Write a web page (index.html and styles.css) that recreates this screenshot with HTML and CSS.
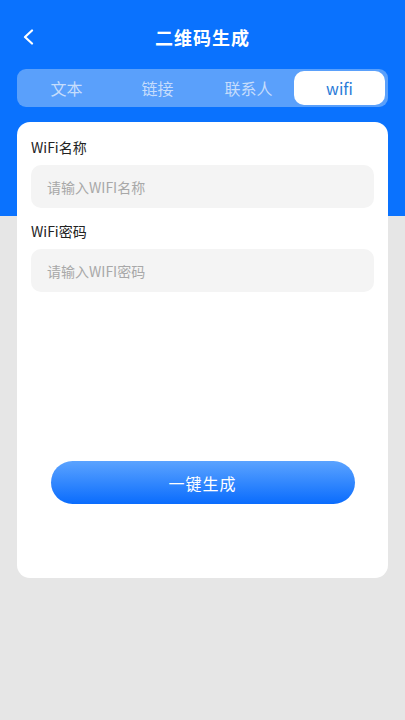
FILE: index.html
```html
<!DOCTYPE html>
<html lang="zh-CN">
<head>
  <meta charset="UTF-8" />
  <title>二维码生成</title>
  <link rel="stylesheet" href="styles.css">
</head>
<body>
  <header class="nav">
    <span class="back">
      <svg viewBox="0 0 12 16" width="12" height="16">
        <path d="M10 1.5 L3 8 L10 14.5" fill="none" stroke="#fff" stroke-width="2.2" stroke-linecap="round" stroke-linejoin="round"/>
      </svg>
    </span>
    <h1>二维码生成</h1>
  </header>

  <!-- 类型切换 -->
  <nav class="tabs">
    <div class="tab">文本</div>
    <div class="tab">链接</div>
    <div class="tab">联系人</div>
    <div class="tab active">wifi</div>
  </nav>

  <main class="card">
    <label class="label">WiFi名称</label>
    <input class="field" type="text" placeholder="请输入WIFI名称">
    <label class="label">WiFi密码</label>
    <input class="field" type="text" placeholder="请输入WIFI密码">
    <button class="submit" type="button">一键生成</button>
  </main>
</body>
</html>
```

FILE: styles.css
```css
body {
  margin: 0; width: 405px; min-height: 720px;
  font-family: "Noto Sans CJK SC", "Noto Sans", sans-serif;
  background: linear-gradient(#0a72fe 0, #0a72fe 216px, #e6e6e6 216px);
}

.nav {display:flex; align-items:center; justify-content:center; height:69px; padding-top:5px; box-sizing:border-box; position:relative;}
.nav h1 {margin:0; font-size:18px; font-weight:700; color:#fff; letter-spacing:1px;}
.back {position:absolute; left:22px; top:29px; width:12px; height:16px;}
.back svg {display:block;}

/* 切换标签 */
.tabs {
  display:flex; margin:0 17px; height:38px; padding:2px 3px 2px 4px; box-sizing:border-box;
  background:#5aa0fb; border-radius:9px;
}
.tab {flex:1; display:flex; align-items:center; justify-content:center;
  font-size:16px; color:#c6ddfc;}
.tab.active {background:#fff; color:#2b7bd8; border-radius:10px;}

/* 表单卡片 */
.card {
  display:flex; flex-direction:column; align-items:stretch;
  margin:15px 17px 0; height:456px; box-sizing:border-box; padding:15px 14px 0;
  background:#fff; border-radius:13px;
}
.label {font-size:14px; line-height:20px; color:#222;}
.field {
  margin:8px 0 13px; height:43px; border:0; outline:0; border-radius:10px;
  background:#f4f4f4; padding:0 16px; font-family:inherit; font-size:14px; color:#333;
}
.field::placeholder {color:#a8a8a8;}
.submit {
  align-self:center; width:304px; height:43px; margin-top:156px; border:0; border-radius:22px;
  background:linear-gradient(#5ba3ff, #0a6cfd); color:#fff;
  font-family:inherit; font-size:16px; letter-spacing:1px;
}
```
